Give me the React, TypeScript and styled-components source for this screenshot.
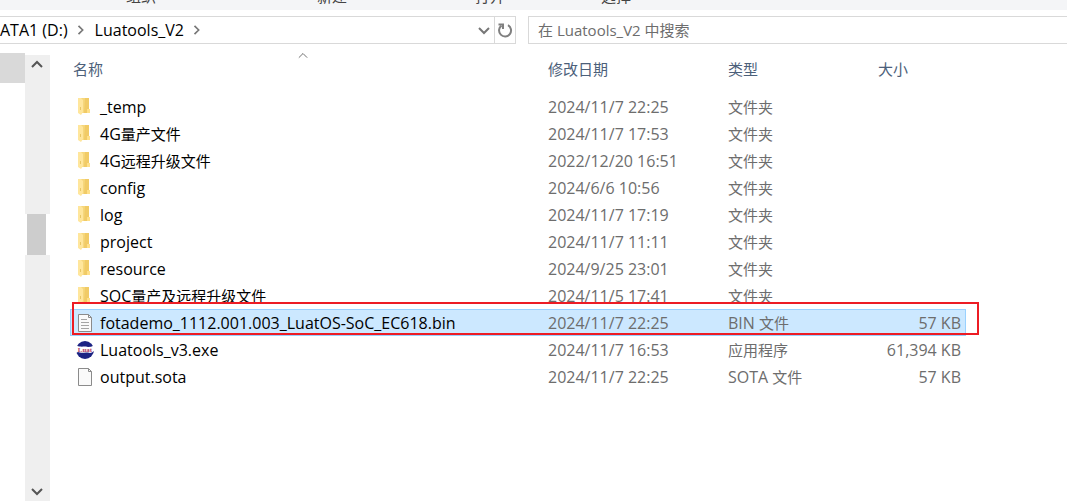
import React from "react";
import styled, { createGlobalStyle } from "styled-components";

const GlobalStyle = createGlobalStyle`
  *, *::before, *::after { box-sizing: border-box; }
  html, body { margin: 0; background: #fff; }
  body {
    font: 16px/26px "Open Sans", "Noto Sans CJK SC", sans-serif;
    color: #000;
    overflow: hidden;
  }
  button, input { font: inherit; }
  svg { display: block; }
`;

const Page = styled.div`
  min-height: 100vh;
  display: flex;
  flex-direction: column;
`;

const Ribbon = styled.div`
  height: 10px;
  flex: none;
  display: flex;
  align-items: flex-end;
  overflow: hidden;
  background: #f4f5f7;
  color: #444;
  font-size: 15px;
  line-height: 24px;
`;

const RibbonGroup = styled.div<{ $width: number }>`
  width: ${(p) => p.$width}px;
  padding-bottom: 2px;
  text-align: center;
`;

const NavBar = styled.div`
  display: flex;
  gap: 12px;
  margin-top: 6px;
  height: 28px;
`;

const AddressBox = styled.div`
  flex: 0 0 516px;
  display: flex;
  align-items: stretch;
  border: 1px solid #d9d9d9;
  border-left: 0;
`;

const Crumbs = styled.nav`
  flex: 1;
  display: flex;
  align-items: center;
  overflow: hidden;
`;

const Crumb = styled.a`
  color: #000;
  text-decoration: none;
  white-space: nowrap;
`;

const CrumbArrow = styled.span`
  width: 27px;
  display: flex;
  justify-content: center;
`;

const IconButton = styled.button<{ $divided?: boolean }>`
  width: ${(p) => (p.$divided ? 21 : 20)}px;
  padding: 0;
  border: 0;
  border-left: ${(p) => (p.$divided ? "1px solid #d9d9d9" : "0")};
  background: none;
  display: flex;
  align-items: center;
  justify-content: center;
`;

const SearchInput = styled.input`
  flex: 1;
  min-width: 0;
  border: 1px solid #d9d9d9;
  border-right: 0;
  padding: 0 9px;
  outline: 0;
  background: #fff;
  font-size: 15px;
  &::placeholder { color: #6d6d6d; opacity: 1; }
`;

const Body = styled.div`
  flex: 1;
  display: flex;
  align-items: stretch;
  padding-top: 9px;
`;

const Tree = styled.div`
  width: 25px;
  flex: none;
`;

const TreeSelection = styled.div`
  height: 30px;
  background: #d9d9d9;
`;

const ScrollBar = styled.div`
  width: 25px;
  flex: none;
  margin: 2px 0 3px;
  display: flex;
  flex-direction: column;
`;

const Track = styled.div<{ $grow: number; $end?: boolean }>`
  flex: ${(p) => p.$grow} 1 0;
  display: flex;
  flex-direction: column;
  align-items: flex-start;
  justify-content: ${(p) => (p.$end ? "flex-end" : "flex-start")};
  background: #efefef;
`;

const ScrollButton = styled.button`
  height: 20px;
  width: 23px;
  padding: 0;
  border: 0;
  background: none;
  display: flex;
  align-items: center;
  justify-content: center;
`;

const Thumb = styled.div`
  width: 19px;
  height: 41px;
  margin-left: 2px;
  background: #cdcdcd;
`;

const FileArea = styled.main`
  flex: 1;
  padding-left: 20px;
  position: relative;
`;

const FileTable = styled.table`
  width: 896px;
  table-layout: fixed;
  border-collapse: separate;
  border-spacing: 0;
`;

const HeadCell = styled.th<{ $width: number }>`
  width: ${(p) => p.$width}px;
  height: 40px;
  padding: 0 0 8px 3px;
  font-weight: 400;
  font-size: 15px;
  text-align: left;
  color: #4c607a;
  position: relative;
`;

const SortMark = styled.span`
  position: absolute;
  top: -2px;
  left: 228px;
`;

const Row = styled.tr<{ $selected?: boolean }>`
  & > td {
    height: 27px;
    background: ${(p) => (p.$selected ? "#cce8ff" : "transparent")};
    border: 0 solid ${(p) => (p.$selected ? "#99d1ff" : "transparent")};
    border-width: 1px 0;
  }
  & > td:first-child { border-left-width: 1px; }
  & > td:last-child { border-right-width: 1px; }
`;

const Cell = styled.td<{ $right?: boolean }>`
  padding: 0 4px 0 3px;
  color: #6d6d6d;
  white-space: nowrap;
  line-height: 24px;
  text-align: ${(p) => (p.$right ? "right" : "left")};
`;

const NameCell = styled(Cell)`
  padding-left: 5px;
  color: #000;
`;

const NameLayout = styled.div`
  display: flex;
  align-items: center;
  height: 24px;
  gap: 6px;
`;

const Han = styled.span`
  font-size: 15px;
`;

const Marker = styled.div`
  position: absolute;
  top: 249px;
  left: 22px;
  width: 907px;
  height: 33px;
  border: 2px solid #ed1c24;
  pointer-events: none;
`;

/* Chinese runs are set one step smaller than the Latin text beside them. */
const Label = ({ text }: { text: string }) => (
  <span>
    {text.split(/([\u4e00-\u9fff]+)/).map((part, i) =>
      i % 2 ? <Han key={i}>{part}</Han> : part
    )}
  </span>
);

const Chevron = ({ dir, w = 10, color = "#555", stroke = 2 }: { dir: "up" | "down" | "right"; w?: number; color?: string; stroke?: number }) => {
  const d = { up: "M1 8 6 3 11 8", down: "M1 4 6 9 11 4", right: "M3 1 8 6 3 11" }[dir];
  return (
    <svg width={w} height={w} viewBox="0 0 12 12" fill="none" stroke={color} strokeWidth={stroke}>
      <path d={d} />
    </svg>
  );
};

const RefreshIcon = () => (
  <svg width="16" height="16" viewBox="0 0 16 16" fill="none" stroke="#808080" strokeWidth="2">
    <path d="M11 3.200A6 6 0 1 1 4.500 3.600" />
    <path d="M1.500 2.500H6V7" />
  </svg>
);

const FolderIcon = () => (
  <svg width="18" height="20" viewBox="0 0 18 20">
    <path d="M5 1h8v11h1v4H5z" fill="#f6d77c" />
    <path d="M9 1h4v11h1v4H8z" fill="#f1cb66" />
    <path d="M11 12h3v4h-3z" fill="#ffe08a" />
    <path d="M2 1h3l2 2v12l-2 3-3-2z" fill="#ffe69c" />
    <path d="M4.500 10v3" stroke="#e9c765" />
  </svg>
);

const PageIcon = ({ lines }: { lines?: boolean }) => (
  <svg width="18" height="20" viewBox="0 0 18 20">
    <path d="M2.500 1.500h10l3 3v14h-13z" fill="#fafafa" stroke="#8b8b8b" />
    <path d="M12.500 1.500v3h3" fill="none" stroke="#8b8b8b" />
    {lines && <path d="M5 6.500h6M5 9.500h8M5 12.500h8M5 15.500h8" stroke="#a5a5a5" />}
  </svg>
);

const AppIcon = () => (
  <svg width="18" height="20" viewBox="0 0 18 20">
    <circle cx="9" cy="10" r="9" fill="#1c2383" />
    <path d="M0 5.500C4 7.500 8 6 12 7c2 0 4-.5 6-1.500V11c-2 2-4 2.500-6 1.500C8 12 5 13.500 2 12L0 13z" fill="#fff" />
    <text x="9" y="12" fontSize="7" fontWeight="700" fontFamily="Liberation Serif, serif" textAnchor="middle" fill="#b0395f">Luat</text>
  </svg>
);

const icons = {
  folder: <FolderIcon />,
  text: <PageIcon lines />,
  app: <AppIcon />,
  page: <PageIcon />,
};

type FileEntry = { name: string; date: string; type: string; size?: string; icon: keyof typeof icons; selected?: boolean };

const folder = (name: string, date: string): FileEntry => ({ name, date, type: "文件夹", icon: "folder" });

const files: FileEntry[] = [
  folder("_temp", "2024/11/7 22:25"),
  folder("4G量产文件", "2024/11/7 17:53"),
  folder("4G远程升级文件", "2022/12/20 16:51"),
  folder("config", "2024/6/6 10:56"),
  folder("log", "2024/11/7 17:19"),
  folder("project", "2024/11/7 11:11"),
  folder("resource", "2024/9/25 23:01"),
  folder("SOC量产及远程升级文件", "2024/11/5 17:41"),
  { name: "fotademo_1112.001.003_LuatOS-SoC_EC618.bin", date: "2024/11/7 22:25", type: "BIN 文件", size: "57 KB", icon: "text", selected: true },
  { name: "Luatools_v3.exe", date: "2024/11/7 16:53", type: "应用程序", size: "61,394 KB", icon: "app" },
  { name: "output.sota", date: "2024/11/7 22:25", type: "SOTA 文件", size: "57 KB", icon: "page" },
];

export default function App() {
  return (
    <Page>
      <GlobalStyle />
      <Ribbon>
        <RibbonGroup $width={282}>组织</RibbonGroup>
        <RibbonGroup $width={100}>新建</RibbonGroup>
        <RibbonGroup $width={216}>打开</RibbonGroup>
        <RibbonGroup $width={36}>选择</RibbonGroup>
      </Ribbon>
      <NavBar>
        <AddressBox>
          <Crumbs aria-label="路径">
            <Crumb href="#drive">ATA1 (D:)</Crumb>
            <CrumbArrow><Chevron dir="right" color="#777" /></CrumbArrow>
            <Crumb href="#folder">Luatools_V2</Crumb>
            <CrumbArrow><Chevron dir="right" color="#777" /></CrumbArrow>
          </Crumbs>
          <IconButton aria-label="历史"><Chevron dir="down" w={12} color="#777" /></IconButton>
          <IconButton $divided aria-label="刷新"><RefreshIcon /></IconButton>
        </AddressBox>
        <SearchInput type="text" aria-label="搜索" placeholder="在 Luatools_V2 中搜索" />
      </NavBar>
      <Body>
        <Tree><TreeSelection /></Tree>
        <ScrollBar>
          <Track $grow={159}>
            <ScrollButton aria-label="向上滚动"><Chevron dir="up" w={12} /></ScrollButton>
          </Track>
          <Thumb />
          <Track $grow={246} $end>
            <ScrollButton aria-label="向下滚动"><Chevron dir="down" w={12} /></ScrollButton>
          </Track>
        </ScrollBar>
        <FileArea>
          <FileTable>
            <thead>
              <tr>
                <HeadCell $width={475}>名称<SortMark><Chevron dir="up" stroke={1} /></SortMark></HeadCell>
                <HeadCell $width={180}>修改日期</HeadCell>
                <HeadCell $width={150}>类型</HeadCell>
                <HeadCell $width={91}>大小</HeadCell>
              </tr>
            </thead>
            <tbody>
              {files.map((f) => (
                <Row key={f.name} $selected={f.selected}>
                  <NameCell><NameLayout>{icons[f.icon]}<Label text={f.name} /></NameLayout></NameCell>
                  <Cell>{f.date}</Cell>
                  <Cell><Label text={f.type} /></Cell>
                  <Cell $right>{f.size}</Cell>
                </Row>
              ))}
            </tbody>
          </FileTable>
          <Marker />
        </FileArea>
      </Body>
    </Page>
  );
}
